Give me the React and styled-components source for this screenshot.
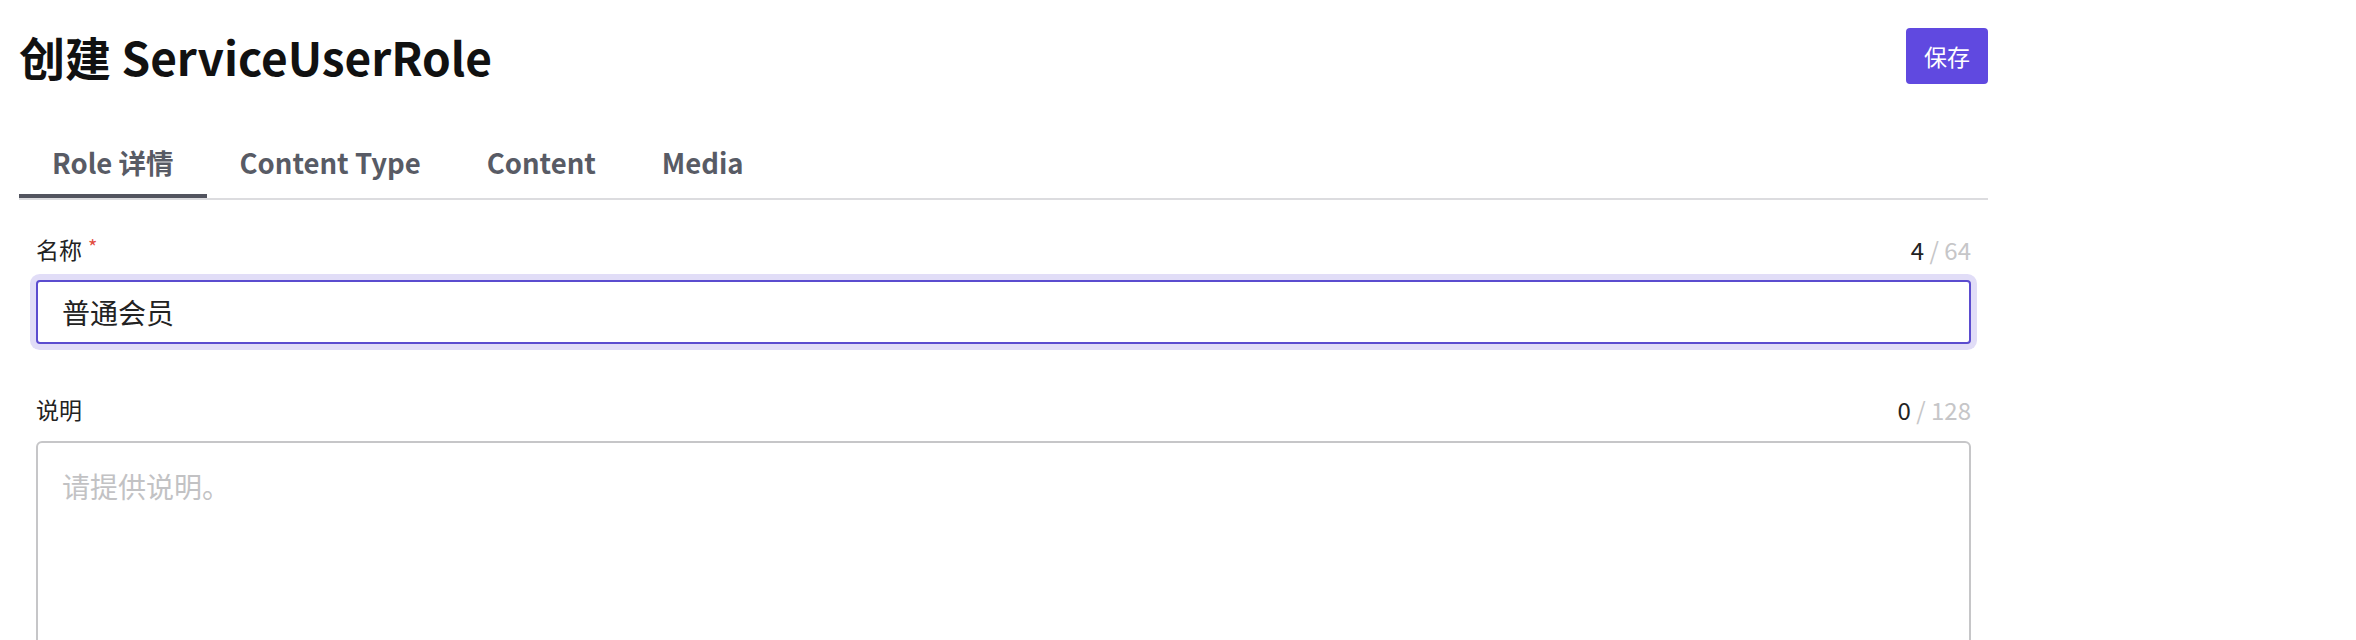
import React, { useState } from "react";
import styled, { createGlobalStyle } from "styled-components";

const GlobalStyle = createGlobalStyle`
  html, body {
    margin: 0;
    padding: 0;
    background: #ffffff;
    font-family: "Noto Sans CJK SC", "Noto Sans", sans-serif;
  }
`;

const Page = styled.div`
  width: 1969px;
  padding: 28px 0 0 19px;
`;

const Header = styled.div`
  display: flex;
  justify-content: space-between;
  align-items: center;
  height: 56px;
`;

const Title = styled.h1`
  margin: 0;
  font-size: 46px;
  font-weight: 700;
  color: #111111;
  line-height: 56px;
`;

const SaveButton = styled.button`
  height: 56px;
  width: 82px;
  border: none;
  border-radius: 4px;
  background: #6049e0;
  color: #ffffff;
  font-family: inherit;
  font-size: 23px;
  cursor: pointer;
`;

const TabBar = styled.div`
  display: flex;
  margin-top: 42px;
  border-bottom: 2px solid #dcdcdf;
`;

const Tab = styled.div`
  display: flex;
  align-items: center;
  box-sizing: border-box;
  height: 72px;
  padding: 4px 33px 0;
  font-size: 27.5px;
  font-weight: 700;
  color: #585b65;
  border-bottom: 4px solid ${(p) => (p.$active ? "#52545f" : "transparent")};
  cursor: pointer;
`;

const Form = styled.div`
  padding: 0 17px;
  margin-top: 34px;
`;

const Field = styled.div`
  margin-bottom: ${(p) => p.$gap || 0}px;
`;

const LabelRow = styled.div`
  display: flex;
  justify-content: space-between;
  align-items: center;
  height: 30px;
  margin-bottom: ${(p) => p.$gap}px;
`;

const Label = styled.label`
  font-size: 23px;
  color: #222222;
`;

const Required = styled.span`
  color: #e24c3f;
  margin-left: 6px;
  font-size: 20px;
  vertical-align: top;
`;

const Counter = styled.div`
  font-size: 24px;
  color: #222222;
  span {
    color: #c6c6c8;
  }
`;

const TextInput = styled.input`
  display: block;
  box-sizing: border-box;
  width: 100%;
  height: 64px;
  padding: 0 24px;
  border: 2px solid #5b4ccf;
  border-radius: 4px;
  box-shadow: 0 0 0 6px #e1ddf7;
  outline: none;
  font-family: inherit;
  font-size: 28px;
  color: #222222;
`;

const TextArea = styled.textarea`
  display: block;
  box-sizing: border-box;
  width: 100%;
  height: 240px;
  padding: 22px 24px;
  border: 2px solid #c6c6c8;
  border-radius: 6px;
  outline: none;
  resize: none;
  font-family: inherit;
  font-size: 28px;
  line-height: 42px;
  color: #222222;
  &::placeholder {
    color: #c2c2c4;
  }
`;

const tabs = ["Role 详情", "Content Type", "Content", "Media"];

export default function App() {
  const [active, setActive] = useState(0);
  const [name, setName] = useState("普通会员");
  const [desc, setDesc] = useState("");

  return (
    <>
      <GlobalStyle />
      <Page>
        <Header>
          <Title>创建 ServiceUserRole</Title>
          <SaveButton>保存</SaveButton>
        </Header>
        <TabBar>
          {tabs.map((t, i) => (
            <Tab key={t} $active={i === active} onClick={() => setActive(i)}>
              {t}
            </Tab>
          ))}
        </TabBar>
        <Form>
          <Field $gap={50}>
            <LabelRow $gap={16}>
              <Label>
                名称<Required>*</Required>
              </Label>
              <Counter>
                {name.length} <span>/ 64</span>
              </Counter>
            </LabelRow>
            <TextInput value={name} onChange={(e) => setName(e.target.value)} />
          </Field>
          <Field>
            <LabelRow $gap={17}>
              <Label>说明</Label>
              <Counter>
                {desc.length} <span>/ 128</span>
              </Counter>
            </LabelRow>
            <TextArea
              placeholder="请提供说明。"
              value={desc}
              onChange={(e) => setDesc(e.target.value)}
            />
          </Field>
        </Form>
      </Page>
    </>
  );
}
